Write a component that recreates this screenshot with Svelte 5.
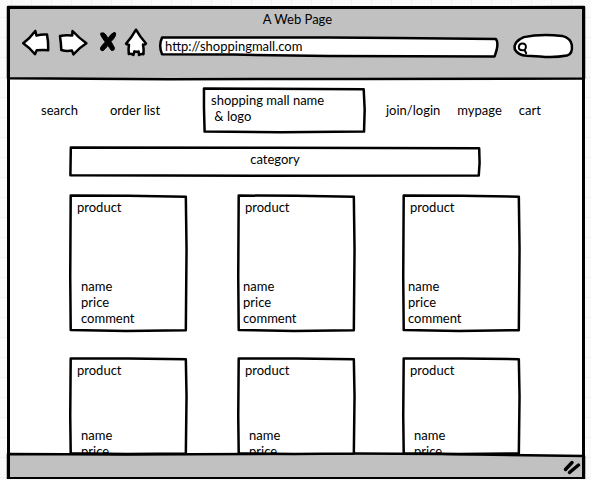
<script>
  const leftLinks = ['search', 'order list'];
  const rightLinks = ['join/login', 'mypage', 'cart'];
  const full = ['name', 'price', 'comment'];
  const short = ['name', 'price'];
  const products = [
    { near: false, cut: false, details: full },
    { near: true, cut: false, details: full },
    { near: true, cut: false, details: full },
    { near: false, cut: true, details: short },
    { near: false, cut: true, details: short },
    { near: false, cut: true, details: short }
  ];
</script>

{#snippet sketch(d, fill)}
  <svg class="sketch" viewBox="0 0 100 100" preserveAspectRatio="none" aria-hidden="true">
    <path {d} {fill} vector-effect="non-scaling-stroke" />
  </svg>
{/snippet}

<div class="window">
  <header>
    {@render sketch('M0 0 L60 .6 L100 0 V98 L60 98.5 L28 99 L0 97.6 Z', '#c1c1c1')}
    <div class="title">A Web Page</div>
    <div class="toolbar">
      <div class="buttons">
        <button class="arrow" aria-label="Back">
          <svg viewBox="0 0 32 32"><path d="M1.2 15.3 Q8 10 13.3 2.9 L14.5 7.6 Q20 6 25 6.6 Q26.5 14 26.2 22.2 Q20 22 14.7 22.3 L13 26.2 Q8 20 1.2 15.3Z" /></svg>
        </button>
        <button class="arrow" aria-label="Forward">
          <svg viewBox="0 0 32 32"><path d="M2 8 Q8 6.6 14.2 7.6 L14.5 3 Q21 10 28.4 15.3 Q21 20 15.4 26.4 L14 22.6 Q8 23.4 3.3 22 Q3 15 2 8Z" /></svg>
        </button>
        <button class="stop" aria-label="Stop">
          <svg viewBox="0 0 27 32"><path class="solid" d="M7 5 Q10 3.8 12 7 L14 10.5 Q17 5.5 20 4.5 Q22.5 4 21.5 7.5 Q20 11 17 13.5 Q19 17 20.5 20 Q20.5 23 17.5 22.5 Q15.5 20 13.8 17.3 Q12 20.5 9 22.8 Q6 23 6.5 19.8 Q8.5 16.5 11.3 14 Q8.5 10.5 7 7.5Z" /></svg>
        </button>
        <button class="home" aria-label="Home">
          <svg viewBox="0 0 24 32"><path d="M11 1.7 Q15 9 21 15.5 Q20 17 18 16.6 Q19 21 18.5 26.2 Q16 25.6 14 27 L13.6 23.4 Q11 24.2 9.4 23.2 L8.4 27 Q6 25.4 3.8 26 Q3.2 21 4 16.8 Q2 17 1 15.8 Q7 9 11 1.7Z" /></svg>
        </button>
      </div>
      <div class="address">
        {@render sketch('M.9 3 L28 3 L50 3 L70 5 L99.4 10 Q100.4 34 99 97 L50 95 L22 88 L.9 86 Q-.2 42 .9 3 Z', '#fff')}
        <input type="text" aria-label="Address" value="http://shoppingmall.com" />
      </div>
      <div class="find">
        {@render sketch('M18 13 Q45 -1 82 8 Q96 18 98 45 Q100 82 90 90 Q68 100 45 94 L23 91 Q8 88 3 64 Q0 32 18 13 Z', '#fff')}
        <svg class="lens" viewBox="0 0 12 14" aria-hidden="true"><path d="M4.8 1.6 Q9 1.2 8.9 5 Q8.6 8.6 5.2 8.3 Q1.5 8 1.8 4.8 Q2.2 2 4.8 1.6Z M7.6 8 L9.2 11.2" /></svg>
        <input type="search" aria-label="Search the web" />
      </div>
    </div>
  </header>

  <main>
    <nav>
      <div class="left">
        {#each leftLinks as link}<a href="#top">{link}</a>{/each}
      </div>
      <a class="logo" href="#top">
        {@render sketch('M.6 3 L40 4 L99.2 5 L99.8 50 L99.4 97 L48 98.5 L1 97 L.6 45 Z', '#fff')}
        <span>shopping mall name<br />&nbsp;&amp; logo</span>
      </a>
      <div class="right">
        {#each rightLinks as link}<a href="#top">{link}</a>{/each}
      </div>
    </nav>

    <div class="category">
      {@render sketch('M.2 2 L50 3 L99.8 4 L99.9 55 L99.7 98 L45 99 L.1 97 Z', '#fff')}
      <span>category</span>
    </div>

    <div class="products">
      {#each products as p}
        <article class:cut={p.cut} class:near={p.near}>
          {@render sketch('M.6 .4 L50 .6 L99 1.2 L99.6 40 L99 99.4 L48 100 L.6 99.2 L.2 60 Z', '#fff')}
          <div class="body">
            <div class="name">product</div>
            <div class="details">
              {#each p.details as line}<div>{line}</div>{/each}
            </div>
          </div>
        </article>
      {/each}
    </div>
  </main>

  <footer>
    {@render sketch('M0 0 L20 2 L60 -2 L75 0 L100 8 V100 L60 98 L0 99 Z', '#c1c1c1')}
    <svg class="grip" viewBox="0 0 18 16" aria-hidden="true"><path d="M2.5 10.5 L9 3.5 M6.5 13.5 L15.5 6" /></svg>
  </footer>
</div>

<style>
  :global(body) {
    margin: 0;
    background-color: #fafafa;
    background-image:
      linear-gradient(90deg, #f1f1f1 1px, transparent 1px),
      linear-gradient(#f1f1f1 1px, transparent 1px);
    background-size: 20px 20px;
    background-position: 11px 17px;
  }

  .window {
    margin: 7px 7px 0 8px;
    font: 13px/16px Lato, 'Liberation Sans', sans-serif;
    color: #000;
    background: #fff;
    position: relative;
    display: flow-root;
  }

  .window::after {
    content: '';
    position: absolute;
    inset: -1px;
    border: 3px solid #000;
    border-radius: 2px;
    pointer-events: none;
  }

  .sketch {
    position: absolute;
    inset: 0;
    width: 100%;
    height: 100%;
    overflow: visible;
    pointer-events: none;
  }

  .sketch path,
  button path,
  .lens path,
  .grip path {
    stroke: #000;
    stroke-width: 2.5px;
    stroke-linejoin: round;
    stroke-linecap: round;
  }

  a {
    color: inherit;
    text-decoration: none;
  }

  header {
    position: relative;
    height: 73px;
    box-sizing: border-box;
    padding: 4px 11px 0 14px;
  }

  .title {
    position: relative;
    text-align: center;
  }

  .toolbar {
    position: relative;
    display: flex;
    align-items: center;
    padding-top: 1px;
  }

  .buttons {
    display: flex;
    gap: 4px;
    margin-right: 10px;
  }

  .buttons .home {
    margin-left: -4px;
  }

  button {
    padding: 0;
    border: 0;
    background: none;
    height: 32px;
  }

  button svg {
    display: block;
    width: 100%;
    height: 100%;
    overflow: visible;
    fill: #fff;
  }

  button .solid {
    fill: #000;
    stroke-width: 1px;
  }

  .arrow {
    width: 32px;
  }

  .stop {
    width: 31px;
  }

  .stop svg {
    width: 27px;
  }

  .home {
    width: 24px;
  }

  .address {
    position: relative;
    flex: 1;
    height: 20px;
    margin: 5px 15px 0 0;
  }

  .find {
    position: relative;
    width: 60px;
    height: 24px;
    margin-top: 4px;
  }

  input {
    position: relative;
    display: block;
    width: 100%;
    height: 100%;
    box-sizing: border-box;
    padding: 0 6px 2px;
    border: 0;
    outline: 0;
    background: none;
    font: inherit;
    color: inherit;
    appearance: none;
  }

  .find input {
    padding-left: 18px;
  }

  .lens {
    position: absolute;
    left: 4px;
    top: 8px;
    width: 12px;
    height: 14px;
    fill: none;
  }

  .lens path {
    stroke-width: 2px;
  }

  nav {
    display: grid;
    grid-template-columns: 195fr 162px 219fr;
    align-items: center;
    padding-top: 7px;
  }

  .left,
  .right {
    display: flex;
  }

  .left {
    gap: 32px;
    padding-left: 33px;
  }

  .right {
    gap: 17px;
    padding-left: 21px;
  }

  .logo {
    position: relative;
    height: 46px;
    box-sizing: border-box;
    padding: 5px 8px;
  }

  .logo span,
  .category span {
    position: relative;
  }

  .category {
    position: relative;
    margin: 14px 104px 0 62px;
    padding: 4px 0 9px;
    text-align: center;
  }

  .products {
    display: grid;
    grid-template-columns: 168fr 165fr 117fr;
    row-gap: 27px;
    margin: 19px 64px 0 62px;
  }

  article {
    position: relative;
    z-index: 1;
    max-width: 117px;
  }

  .body {
    position: relative;
    height: 136px;
    box-sizing: border-box;
    padding: 4px 0 4px 7px;
    overflow: hidden;
  }

  .details {
    margin-top: 63px;
    padding-left: 4px;
  }

  .near .details {
    margin-left: -2px;
    padding-left: 0;
  }

  .cut .body {
    height: 96px;
  }

  .cut .details {
    margin-top: 49px;
  }

  footer {
    position: relative;
    height: 25px;
    display: flex;
    justify-content: flex-end;
    align-items: center;
    padding-right: 3px;
  }

  .grip {
    position: relative;
    width: 18px;
    height: 16px;
    fill: none;
  }

  .grip path {
    stroke-width: 3.5px;
  }
</style>
